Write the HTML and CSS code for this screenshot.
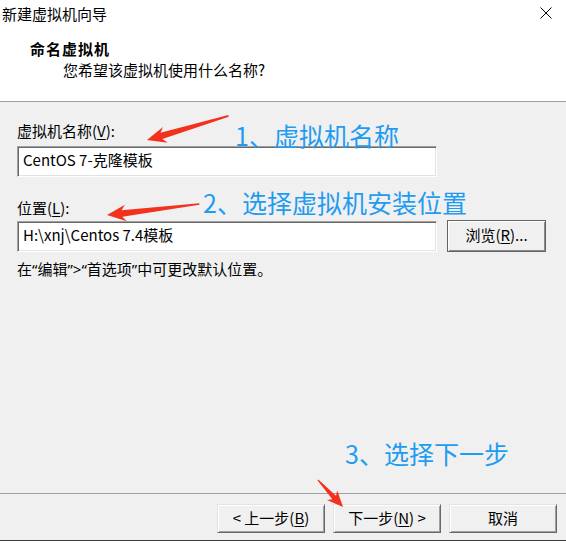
FILE: index.html
```html
<!DOCTYPE html>
<html lang="zh-CN">
<head>
    <meta charset="UTF-8">
    <title>新建虚拟机向导</title>
    <link rel="stylesheet" href="styles.css">
</head>
<body>
    <div class="window">
        <div class="header">
            <div class="titlebar">
                <span class="title">新建虚拟机向导</span>
                <svg class="close" width="12" height="12" viewBox="0 0 12 12">
                    <path d="M0.5 0.5 L11.5 11.5 M11.5 0.5 L0.5 11.5" stroke="#000" stroke-width="1" fill="none"/>
                </svg>
            </div>
            <div class="heading">命名虚拟机</div>
            <div class="subheading">您希望该虚拟机使用什么名称?</div>
        </div>

        <div class="content">
            <div class="label">虚拟机名称(<u>V</u>):</div>
            <div class="field wide">CentOS 7-克隆模板</div>

            <div class="label second">位置(<u>L</u>):</div>
            <div class="row">
                <div class="field">H:\xnj\Centos 7.4模板</div>
                <div class="button browse">浏览(<u>R</u>)...</div>
            </div>
            <div class="hint">在<span class="q">“</span>编辑<span class="q">”&gt;“</span>首选项<span class="q">”</span>中可更改默认位置。</div>
        </div>

        <div class="footer">
            <div class="button">&lt; 上一步(<u>B</u>)</div>
            <div class="button">下一步(<u>N</u>) &gt;</div>
            <div class="button">取消</div>
        </div>
        <div class="behind"></div>

        <!-- annotations drawn over the dialog -->
        <div class="note note1">1、虚拟机名称</div>
        <div class="note note2">2、选择虚拟机安装位置</div>
        <div class="note note3">3、选择下一步</div>
        <svg class="arrows" width="566" height="544" viewBox="0 0 566 544">
            <polygon transform="translate(147 140) rotate(-16.5)" points="0,0 19,-8 15,-3 85,-0.8 85,0.8 15,3.5 19,8.5"/>
            <polygon transform="translate(107 215) rotate(-6.8)" points="0,0 19,-8 15,-3 93,-0.8 93,0.8 15,3.5 19,8.5"/>
            <polygon transform="translate(343 507) rotate(-132.8)" points="0,0 16,-7 13,-2.5 37,-0.6 37,0.6 13,2.5 16,7"/>
        </svg>
    </div>
</body>
</html>
```

FILE: styles.css
```css
body {
    margin: 0;
    font-family: "Noto Sans CJK SC", "Noto Sans", sans-serif;
    font-size: 15px;
    color: #000;
    background-color: #f0f0f0;
}

.window {
    position: relative;
    width: 566px;
    height: 544px;
    display: flex;
    flex-direction: column;
    overflow: hidden;
}

.header {
    background-color: #fff;
    height: 101px;
    border-bottom: 1px solid #a0a0a0;
}

.titlebar {
    height: 28px;
    line-height: 28px;
    padding-left: 2px;
    display: flex;
    justify-content: space-between;
    align-items: center;
}

.close {
    margin-right: 14px;
    margin-top: -2px;
}

.heading {
    margin-top: 11px;
    padding-left: 30px;
    line-height: 20px;
    font-weight: bold;
    letter-spacing: 1px;
}

.subheading {
    margin-top: 1px;
    padding-left: 63px;
    line-height: 20px;
}

.content {
    flex: 1;
    padding: 19px 0 0 17px;
}

.label {
    line-height: 20px;
}

.label.second {
    margin-top: 21px;
}

.field {
    box-sizing: border-box;
    width: 420px;
    height: 31px;
    margin-top: 5px;
    padding-left: 5px;
    line-height: 25px;
    background-color: #fff;
    border-style: solid;
    border-width: 1px;
    border-color: #a0a0a0 #fff #fff #a0a0a0;
    box-shadow: inset 1px 1px 0 #696969, inset -1px -1px 0 #e3e3e3;
}

.row {
    display: flex;
    align-items: flex-start;
    gap: 10px;
    margin-top: 2px;
}

.row .field {
    margin-top: 1px;
}

.button {
    box-sizing: border-box;
    width: 108px;
    height: 29px;
    line-height: 26px;
    text-align: center;
    background-color: #f0f0f0;
    border-style: solid;
    border-width: 1px;
    border-color: #e3e3e3 #696969 #696969 #e3e3e3;
    box-shadow: inset 1px 1px 0 #fff, inset -1px -1px 0 #a0a0a0;
}

.button.browse {
    width: 99px;
    height: 32px;
    line-height: 28px;
    border-color: #646464;
    box-shadow: inset 1px 1px 0 #fff, inset -1px -1px 0 #8a8a8a;
}

.hint {
    margin-top: 7px;
    line-height: 20px;
}

.hint .q {
    font-family: "Noto Sans", sans-serif;
}

.footer {
    height: 47px;
    box-sizing: border-box;
    border-top: 1px solid #a0a0a0;
    padding: 10px 9px 0 0;
    display: flex;
    justify-content: flex-end;
    gap: 8px;
}

.behind {
    height: 3px;
    border-top: 1px solid #3c3c3c;
    background-color: #fff;
}

u {
    text-decoration-thickness: 1px;
    text-underline-offset: 2px;
}

.note {
    position: absolute;
    font-size: 25px;
    line-height: 25px;
    color: #1f9cf0;
    white-space: nowrap;
}

.note1 {
    left: 235px;
    top: 123px;
}

.note2 {
    left: 203px;
    top: 190px;
}

.note3 {
    left: 345px;
    top: 441px;
}

.arrows {
    position: absolute;
    left: 0;
    top: 0;
    pointer-events: none;
}

.arrows polygon {
    fill: #f2311f;
}
```
